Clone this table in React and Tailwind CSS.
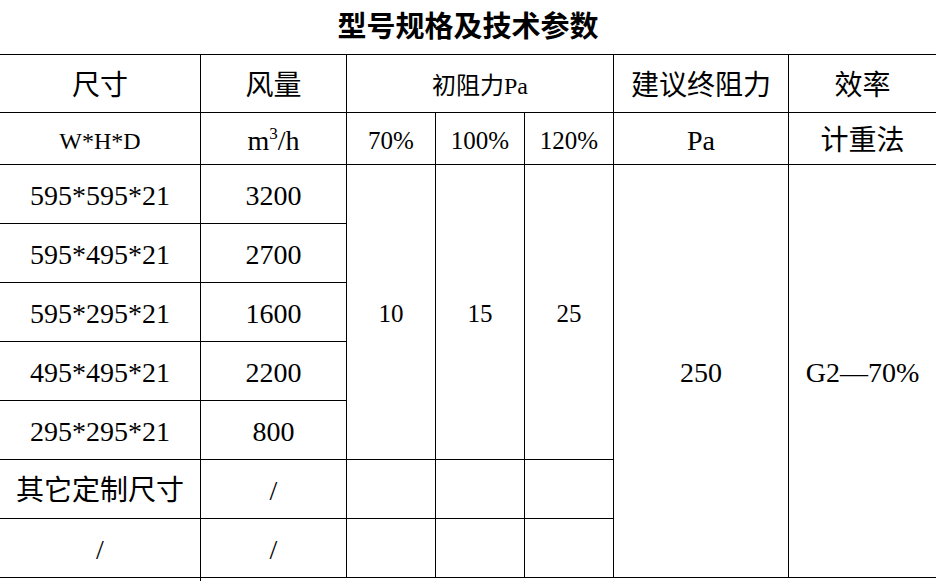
import React from "react";

const F = { fontFamily: '"Liberation Serif", "Noto Sans CJK SC", serif' };

function C({ children, className = "" }) {
  return (
    <div className={`bg-white flex items-center justify-center pt-[4px] text-black whitespace-nowrap ${className}`}>
      {children}
    </div>
  );
}

export default function App() {
  const sizes = [
    ["595*595*21", "3200"],
    ["595*495*21", "2700"],
    ["595*295*21", "1600"],
    ["495*495*21", "2200"],
    ["295*295*21", "800"],
  ];
  const rows = ["row-start-3", "row-start-4", "row-start-5", "row-start-6", "row-start-7"];
  return (
    <div className="w-[936px] h-[581px] bg-white overflow-hidden" style={F}>
      <div className="h-[54px] flex items-center justify-center text-[29px] font-bold text-black pt-[1px]">
        型号规格及技术参数
      </div>
      <div className="grid grid-cols-[200px_145px_88px_88px_88px_174px_147px] grid-rows-[57px_51px_repeat(7,58px)] gap-px bg-black border-t border-b border-black text-[28px]">
        {/* header row 1 */}
        <C className="col-start-1 row-start-1">尺寸</C>
        <C className="col-start-2 row-start-1">风量</C>
        <C className="col-start-3 col-span-3 row-start-1 text-[24px]">初阻力Pa</C>
        <C className="col-start-6 row-start-1">建议终阻力</C>
        <C className="col-start-7 row-start-1">效率</C>
        {/* header row 2 */}
        <C className="col-start-1 row-start-2 text-[24px]">W*H*D</C>
        <C className="col-start-2 row-start-2">
          <span>
            m<span className="text-[17px] relative -top-[11px]">3</span>/h
          </span>
        </C>
        <C className="col-start-3 row-start-2 text-[25px]">70%</C>
        <C className="col-start-4 row-start-2 text-[25px]">100%</C>
        <C className="col-start-5 row-start-2 text-[25px]">120%</C>
        <C className="col-start-6 row-start-2">Pa</C>
        <C className="col-start-7 row-start-2">计重法</C>
        {/* data rows */}
        {sizes.map(([s, v], i) => (
          <React.Fragment key={s}>
            <C className={`col-start-1 ${rows[i]}`}>{s}</C>
            <C className={`col-start-2 ${rows[i]}`}>{v}</C>
          </React.Fragment>
        ))}
        <C className="col-start-3 row-start-3 row-span-5 text-[25px]">10</C>
        <C className="col-start-4 row-start-3 row-span-5 text-[25px]">15</C>
        <C className="col-start-5 row-start-3 row-span-5 text-[25px]">25</C>
        <C className="col-start-6 row-start-3 row-span-7">250</C>
        <C className="col-start-7 row-start-3 row-span-7">G2—70%</C>
        <C className="col-start-1 row-start-8">其它定制尺寸</C>
        <C className="col-start-2 row-start-8">/</C>
        <C className="col-start-3 row-start-8" />
        <C className="col-start-4 row-start-8" />
        <C className="col-start-5 row-start-8" />
        <C className="col-start-1 row-start-9">/</C>
        <C className="col-start-2 row-start-9">/</C>
        <C className="col-start-3 row-start-9" />
        <C className="col-start-4 row-start-9" />
        <C className="col-start-5 row-start-9" />
      </div>
      <div className="flex h-[10px]">
        <div className="w-[201px] border-r border-black" />
      </div>
    </div>
  );
}
